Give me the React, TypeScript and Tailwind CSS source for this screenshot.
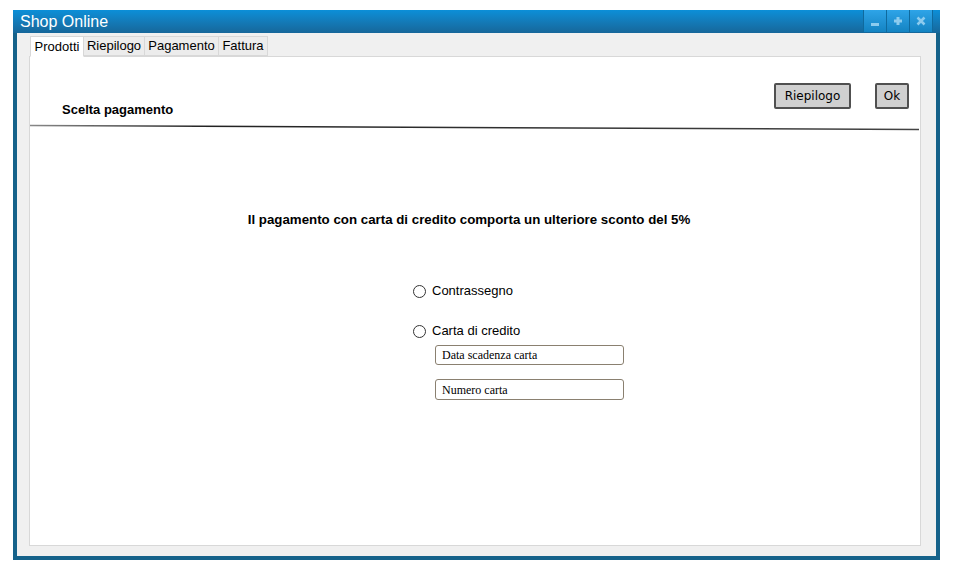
import React from "react";

export default function App() {
  const tabs = ["Prodotti", "Riepilogo", "Pagamento", "Fattura"];
  const widths = ["w-[54px]", "w-[61px]", "w-[74px]", "w-[49px]"];
  return (
    <div className="w-[953px] h-[578px] bg-white pt-[10px] pl-[13px]" style={{ fontFamily: '"Liberation Sans", Arial, sans-serif' }}>
      <div className="w-[927px] h-[550px] flex flex-col bg-[#15628a] px-[4px] pb-[4px]">
        <div className="h-[23px] flex items-center justify-between bg-gradient-to-b from-[#0b8fd8] to-[#16679a] -mx-[4px] pl-[7px] pr-[7px]">
          <span className="text-white text-[16px] leading-none">Shop Online</span>
          <div className="flex h-[22px] self-start border-r border-[#0f6a9e]">
            {[0, 1, 2].map((i) => (
              <div key={i} className="w-[23px] h-[22px] flex items-center justify-center bg-gradient-to-b from-[#2ea4e8] to-[#1383c2] border-l border-[#0f6a9e]">
                {i === 0 && <div className="w-[8px] h-[3px] bg-[#8ccbee] mt-[6px]" />}
                {i === 1 && (
                  <svg width="10" height="10" viewBox="0 0 10 10"><path d="M5 1v8M1 5h8" stroke="#8ccbee" strokeWidth="3" /></svg>
                )}
                {i === 2 && (
                  <svg width="10" height="10" viewBox="0 0 10 10"><path d="M1.5 1.5l7 7M8.5 1.5l-7 7" stroke="#8ccbee" strokeWidth="2.5" /></svg>
                )}
              </div>
            ))}
          </div>
        </div>
        <div className="flex-1 bg-[#f0f0f0] flex flex-col pl-[12px] pr-[15px] pb-[10px] pt-[2px]">
          <div className="flex items-end pl-[1px] h-[21px]">
            {tabs.map((t, i) => (
              <div
                key={t}
                className={`${widths[i]} flex items-center justify-center text-[13px] text-black border border-[#d8d8d8] ${i === 0 ? "h-[21px] bg-white border-b-white relative top-[1px]" : "h-[20px] bg-[#ececec] border-l-0"}`}
              >
                {t}
              </div>
            ))}
          </div>
          <div className="flex-1 bg-white border border-[#d8d8d8] flex flex-col">
            <div className="h-[67px] flex items-start justify-between pt-[26px] pr-[11px]">
              <div className="pl-[32px] pt-[17px] text-[13px] font-bold text-black">Scelta pagamento</div>
              <div className="flex gap-[24px]">
                <div className="w-[77px] h-[26px] bg-[#d0d0d0] border-2 border-[#505050] rounded-[2px] flex items-center justify-center text-[12px] text-black" style={{ fontFamily: '"DejaVu Sans", sans-serif' }}>Riepilogo</div>
                <div className="w-[34px] h-[26px] bg-[#d0d0d0] border-2 border-[#505050] rounded-[2px] flex items-center justify-center text-[12px] text-black" style={{ fontFamily: '"DejaVu Sans", sans-serif' }}>Ok</div>
              </div>
            </div>
            <svg width="889" height="7" className="block">
              <defs>
                <linearGradient id="lg" x1="0" x2="1" y1="0" y2="0">
                  <stop offset="0" stopColor="#888" />
                  <stop offset="0.2" stopColor="#222" />
                  <stop offset="1" stopColor="#444" />
                </linearGradient>
              </defs>
              <line x1="0" y1="1.5" x2="889" y2="5.5" stroke="url(#lg)" strokeWidth="1.5" />
            </svg>
            <div className="pt-[81px] pr-[12px] text-center text-[13.3px] font-bold text-black leading-[16px]">
              Il pagamento con carta di credito comporta un ulteriore sconto del 5%
            </div>
            <div className="pl-[383px] pt-[55px] flex flex-col text-[13px] text-black">
              <div className="flex items-center h-[16px]">
                <div className="w-[13px] h-[13px] rounded-full border border-[#333] bg-white" />
                <span className="ml-[6px]">Contrassegno</span>
              </div>
              <div className="flex items-center h-[16px] mt-[24px]">
                <div className="w-[13px] h-[13px] rounded-full border border-[#333] bg-white" />
                <span className="ml-[6px]">Carta di credito</span>
              </div>
              <div className="ml-[22px] mt-[6px] w-[189px] h-[20px] border border-[#8a8070] rounded-[3px] flex items-center pl-[6px] text-[12px]" style={{ fontFamily: '"Liberation Serif", serif' }}>Data scadenza carta</div>
              <div className="ml-[22px] mt-[14px] w-[189px] h-[21px] border border-[#8a8070] rounded-[3px] flex items-center pl-[6px] text-[12px]" style={{ fontFamily: '"Liberation Serif", serif' }}>Numero carta</div>
            </div>
          </div>
        </div>
      </div>
    </div>
  );
}
